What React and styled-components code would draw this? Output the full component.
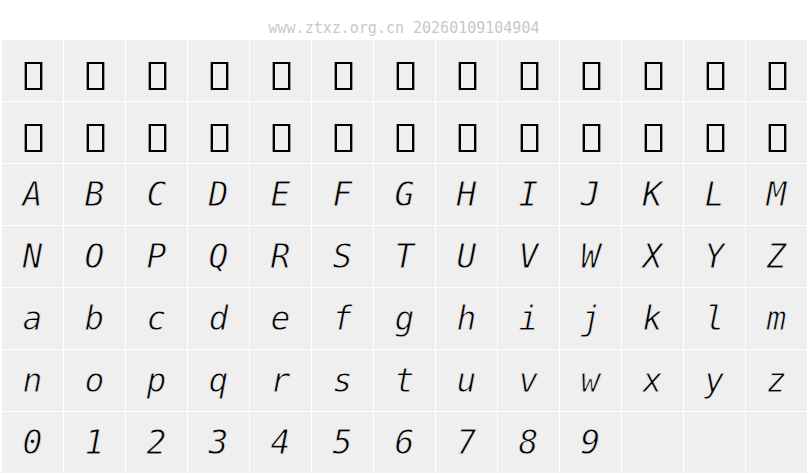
import React from "react";
import styled, { createGlobalStyle } from "styled-components";

const Global = createGlobalStyle`
  html, body { margin: 0; padding: 0; background: #ffffff; }
  body { width: 808px; height: 476px; overflow: hidden; }
`;

const Page = styled.div`
  width: 808px;
  height: 476px;
  background: #ffffff;
`;

const Header = styled.div`
  height: 40px;
  box-sizing: border-box;
  padding-top: 19px;
  text-align: center;
  font-family: "DejaVu Sans Mono", monospace;
  font-size: 15px;
  line-height: 18px;
  color: #c8c8c8;
`;

const Grid = styled.div`
  display: grid;
  grid-template-columns: repeat(13, 61px);
  grid-auto-rows: 61px;
  gap: 1px;
  padding-left: 2px;
`;

const Cell = styled.div`
  background: #efefef;
  display: flex;
  align-items: center;
  justify-content: center;
  font-family: "DejaVu Sans Mono", monospace;
  font-style: italic;
  font-size: 33px;
  line-height: 1;
  color: #000000;
  -webkit-text-stroke: 0.8px #efefef;
`;

const Tofu = styled.span`
  display: block;
  width: 13px;
  height: 24px;
  margin-top: 10px;
  margin-left: 2px;
  border: 2px solid #000000;
  box-shadow: -1px 0 0 #9a9a9a, 1px 0 0 #9a9a9a;
`;

const upper = "ABCDEFGHIJKLMNOPQRSTUVWXYZ".split("");
const lower = "abcdefghijklmnopqrstuvwxyz".split("");
const digits = "0123456789".split("");

export default function App() {
  const cells = [];
  for (let i = 0; i < 26; i++) cells.push({ tofu: true });
  upper.forEach((c) => cells.push({ ch: c }));
  lower.forEach((c) => cells.push({ ch: c }));
  digits.forEach((c) => cells.push({ ch: c }));
  while (cells.length < 91) cells.push({ ch: "" });
  return (
    <Page>
      <Global />
      <Header>www.ztxz.org.cn 20260109104904</Header>
      <Grid>
        {cells.map((c, i) => (
          <Cell key={i}>{c.tofu ? <Tofu /> : c.ch}</Cell>
        ))}
      </Grid>
    </Page>
  );
}
